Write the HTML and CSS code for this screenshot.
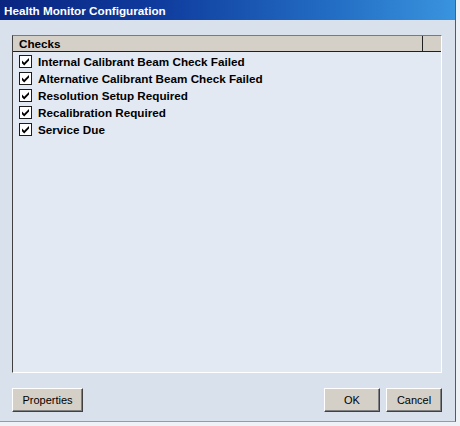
FILE: index.html
```html
<!DOCTYPE html>
<html>
<head>
<meta charset="utf-8">
<link rel="stylesheet" href="styles.css">
</head>
<body>
<div class="dialog">
  <div class="titlebar">Health Monitor Configuration</div>
  <div class="content">
    <div class="listbox">
      <div class="header">
        <div class="hcol main">Checks</div>
        <div class="hcol extra"></div>
      </div>
      <div class="rows">
        <div class="row"><span class="cb"><svg viewBox="0 0 11 11" width="11" height="11"><path d="M2 4.5 L4.2 6.7 L9 1.9 L9 4.6 L4.2 9.4 L2 7.2 Z" fill="#000"/></svg></span><span class="label">Internal Calibrant Beam Check Failed</span></div>
        <div class="row"><span class="cb"><svg viewBox="0 0 11 11" width="11" height="11"><path d="M2 4.5 L4.2 6.7 L9 1.9 L9 4.6 L4.2 9.4 L2 7.2 Z" fill="#000"/></svg></span><span class="label">Alternative Calibrant Beam Check Failed</span></div>
        <div class="row"><span class="cb"><svg viewBox="0 0 11 11" width="11" height="11"><path d="M2 4.5 L4.2 6.7 L9 1.9 L9 4.6 L4.2 9.4 L2 7.2 Z" fill="#000"/></svg></span><span class="label">Resolution Setup Required</span></div>
        <div class="row"><span class="cb"><svg viewBox="0 0 11 11" width="11" height="11"><path d="M2 4.5 L4.2 6.7 L9 1.9 L9 4.6 L4.2 9.4 L2 7.2 Z" fill="#000"/></svg></span><span class="label">Recalibration Required</span></div>
        <div class="row"><span class="cb"><svg viewBox="0 0 11 11" width="11" height="11"><path d="M2 4.5 L4.2 6.7 L9 1.9 L9 4.6 L4.2 9.4 L2 7.2 Z" fill="#000"/></svg></span><span class="label">Service Due</span></div>
      </div>
    </div>
    <div class="buttons">
      <button class="btn props">Properties</button>
      <div class="spacer"></div>
      <button class="btn ok">OK</button>
      <button class="btn cancel">Cancel</button>
    </div>
  </div>
</div>
</body>
</html>
```
FILE: styles.css
```css
html, body {
  margin: 0;
  padding: 0;
}
body {
  width: 460px;
  height: 426px;
  background: #eef1f5;
  font-family: "Liberation Sans", Arial, sans-serif;
  font-size: 11px;
  overflow: hidden;
}
.dialog {
  width: 455px;
  height: 421px;
  background: #d9e1ed;
  border-right: 1px solid #5a5a5a;
  border-bottom: 1px solid #9a9a9a;
  display: flex;
  flex-direction: column;
}
.titlebar {
  height: 20px;
  line-height: 21px;
  padding-left: 4px;
  color: #fff;
  font-weight: bold;
  font-size: 11.7px;
  background: linear-gradient(to right, #0a2580 0%, #0f3c9e 35%, #2470c6 75%, #3a94de 100%);
}
.content {
  flex: 1;
  display: flex;
  flex-direction: column;
  padding: 15px 13px 9px 12px;
}
.listbox {
  height: 336px;
  background: #e3e9f3;
  border-top: 1px solid #7a7a7a;
  border-left: 1px solid #404040;
  border-right: 1px solid #ffffff;
  border-bottom: 1px solid #ffffff;
  display: flex;
  flex-direction: column;
}
.header {
  display: flex;
  height: 15px;
  background: #d4d0c8;
  border-bottom: 1px solid #202020;
}
.hcol {
  font-weight: bold;
  font-size: 11.7px;
  line-height: 16px;
}
.hcol.main {
  width: 410px;
  padding-left: 6px;
  border-right: 1px solid #202020;
  box-sizing: border-box;
}
.hcol.extra {
  flex: 1;
}
.rows {
  padding: 1px 0 0 6px;
  display: flex;
  flex-direction: column;
}
.row {
  height: 17px;
  display: flex;
  align-items: center;
}
.cb {
  width: 11px;
  height: 11px;
  border: 1px solid #1c1c1c;
  background: #fff;
  display: flex;
  align-items: center;
  justify-content: center;
  margin-right: 6px;
}
.cb svg {
  display: block;
  width: 11px;
  height: 11px;
}
.label {
  font-weight: bold;
  font-size: 11.7px;
  color: #000;
}
.buttons {
  display: flex;
  margin-top: 15px;
}
.spacer {
  flex: 1;
}
.btn {
  height: 24px;
  box-sizing: border-box;
  background: #d4d0c8;
  border: none;
  border-top: 1px solid #ffffff;
  border-left: 1px solid #ffffff;
  border-right: 1px solid #404040;
  border-bottom: 1px solid #404040;
  box-shadow: inset -1px -1px 0 #808080;
  font-family: "Liberation Sans", Arial, sans-serif;
  font-size: 11px;
  color: #000;
  padding: 0;
  margin: 0;
}
.props { width: 71px; }
.ok { width: 56px; margin-right: 6px; }
.cancel { width: 56px; }
```
